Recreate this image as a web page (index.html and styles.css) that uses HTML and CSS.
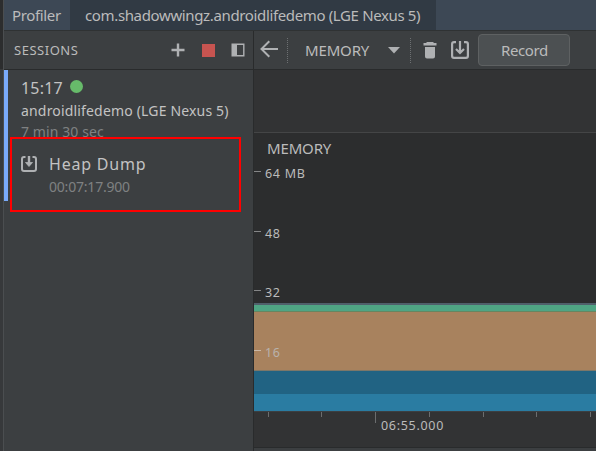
FILE: index.html
```html
<!DOCTYPE html>
<html lang="en">
<head>
<meta charset="utf-8">
<title>Profiler</title>
<link rel="stylesheet" href="styles.css">
</head>
<body>
<div class="window">
  <div class="gutter"></div>
  <div class="main">
    <header class="tabs">
      <div class="tab title"><span class="t-profiler">Profiler</span></div>
      <div class="tab active"><span class="t-app">com.shadowwingz.androidlifedemo (LGE Nexus 5)</span></div>
    </header>
    <div class="panes">
      <aside class="sessions">
        <div class="bar">
          <span class="t-sessions">SESSIONS</span>
          <svg class="ic plus" width="14" height="14" viewBox="0 0 14 14"><path d="M7 .5v13M.5 7h13" stroke="#afb1b3" stroke-width="2.4"/></svg>
          <div class="stop"></div>
          <svg class="ic panel" width="14" height="14" viewBox="0 0 14 14"><path d="M1.2 1.2h11.6v11.6H1.2z" fill="none" stroke="#afb1b3" stroke-width="1.4"/><path d="M1 1h5v12H1z" fill="#afb1b3"/></svg>
        </div>
        <div class="session">
          <div class="time"><span class="t-time">15:17</span><i class="dot"></i></div>
          <div class="device"><span class="t-device">androidlifedemo (LGE Nexus 5)</span></div>
          <div class="length"><span class="t-length">7 min 30 sec</span></div>
          <div class="dump">
            <svg class="ic" width="16" height="16" viewBox="0 0 16 16" fill="none" stroke="#afb1b3" stroke-width="2"><path d="M4.5 1H3Q1 1 1 3v10q0 2 2 2h10q2 0 2-2V3q0-2-2-2h-1.500"/><path d="M8 0v8" stroke-width="2.4"/><path d="M4.500 6.500h7L8 10.500z" fill="#afb1b3" stroke-width=".8"/></svg>
            <div>
              <div class="name"><span class="t-name">Heap Dump</span></div>
              <div class="stamp"><span class="t-stamp">00:07:17.900</span></div>
            </div>
          </div>
        </div>
        <div class="highlight"></div>
      </aside>
      <section class="stage">
        <div class="bar tools">
          <svg class="ic back" width="18" height="18" viewBox="0 0 18 18" fill="none" stroke="#afb1b3" stroke-width="2"><path d="M18 9H2M9.300 1.200L1.500 9l7.800 7.800"/></svg>
          <div class="sep s1"></div>
          <span class="t-tool">MEMORY</span>
          <svg class="ic caret" width="12" height="7" viewBox="0 0 12 7"><path d="M0 0h12L6 6.500z" fill="#afb1b3"/></svg>
          <div class="sep s2"></div>
          <svg class="ic trash" width="14" height="17" viewBox="0 0 14 17" fill="#afb1b3"><path d="M4 0h6l1 1h2.500v2.400H.500V1H3zM2 5h10v9.500q0 2-2 2H4q-2 0-2-2z"/></svg>
          <svg class="ic save" width="18" height="18" viewBox="0 0 18 18" fill="none" stroke="#afb1b3" stroke-width="2.200"><path d="M5 1.100H3Q1.100 1.100 1.100 3v12q0 1.900 1.900 1.900h12q1.900 0 1.900-1.900V3q0-1.900-1.900-1.900h-2M9 0v12M5 8l4 4 4-4"/></svg>
          <button class="record"><span class="t-record">Record</span></button>
        </div>
        <div class="events"></div>
        <div class="chart">
          <div class="stack">
            <div class="layer others"></div>
            <div class="layer code"></div>
            <div class="layer graphics"></div>
            <div class="layer native"></div>
            <div class="layer java"></div>
          </div>
          <div class="axis">
            <div class="heading"><span class="t-chart">MEMORY</span></div>
            <div class="mark"><span class="t-64">64 MB</span></div>
            <div class="mark"><span class="t-num">48</span></div>
            <div class="mark"><span class="t-num">32</span></div>
            <div class="mark over"><span class="t-num">16</span></div>
          </div>
        </div>
        <div class="timeline">
          <svg width="342" height="12" viewBox="0 0 342 12" fill="#6b6d6e"><path d="M14 0h1v5h-1zM67 0h1v5h-1zM121 0h1v11h-1zM175 0h1v5h-1zM229 0h1v5h-1zM282 0h1v5h-1zM336 0h1v5h-1z"/></svg>
          <span class="t-axis">06:55.000</span>
        </div>
        <div class="foot"></div>
      </section>
    </div>
  </div>
</div>
</body>
</html>
```
FILE: styles.css
```css
* { box-sizing: border-box; }
body { margin: 0; font-family: "Noto Sans", "Open Sans", sans-serif; font-size: 15px; color: #bbb; background: #3c3f41; overflow: hidden; }
.window { display: flex; width: 596px; height: 451px; white-space: nowrap; }
.gutter { width: 4px; background: linear-gradient(#2c2d2e 69px, #37393b 69px); border-right: 1px solid #4b4e50; }
.main { flex: 1; min-width: 0; display: flex; flex-direction: column; }
.tabs { display: flex; height: 31px; background: #3d4855; border-bottom: 1px solid #2f3233; line-height: 20px; padding-right: 160px; }
.tab { padding-top: 5px; }
.title { width: 66px; padding-left: 8px; }
.active { width: 366px; flex: none; padding-left: 15px; background: #313a44; }
.panes { display: flex; flex: 1; min-height: 0; }
.sessions { position: relative; width: 250px; border-right: 1px solid #292b2c; }
.bar { display: flex; align-items: center; height: 39px; border-bottom: 1px solid #292b2c; line-height: 20px; }
.ic { display: block; flex: none; }
.sessions .bar { padding-left: 10px; }
.t-sessions { width: 157px; }
.stop { width: 13px; height: 13px; margin-left: 17px; background: #c75450; }
.panel { margin-left: 16px; }
.session { height: 131px; border-left: 4px solid #7aaafa; padding: 6px 0 0 13px; }
.time { display: flex; align-items: center; height: 24px; line-height: 24px; color: #c3c3c3; }
.dot { width: 13px; height: 13px; margin: -3px 0 0 7px; border-radius: 50%; background: #67bb6a; }
.device { height: 21px; line-height: 21px; color: #c3c3c3; }
.length { height: 21px; line-height: 21px; color: #7f8182; }
.dump { display: flex; gap: 12px; padding-top: 13px; }
.dump .ic { margin-top: 1px; }
.name { height: 20px; line-height: 20px; margin-top: -1px; color: #c3c3c3; }
.stamp { height: 24px; line-height: 24px; color: #7f8182; }
.highlight { position: absolute; left: 6px; top: 106px; width: 231px; height: 75px; border: 2px solid #f00; }
.stage { flex: 1; min-width: 0; }
.back { margin: 0 0 2px 6px; }
.sep { width: 1px; height: 25px; background: repeating-linear-gradient(#6d7072 0 1px, transparent 1px 2px); }
.s1 { margin-left: 9px; }
.t-tool { width: 83px; margin-left: 17px; }
.s2 { margin-left: 10px; }
.trash { margin-left: 12px; }
.save { margin-left: 14px; }
.record { width: 92px; height: 32px; margin-left: 9px; padding: 0; border: 1px solid #5e6162; border-radius: 4px; background: #4c5052; color: inherit; font: inherit; line-height: 20px; text-align: left; padding-left: 22px; }
.events { height: 63px; background: #323334; border-bottom: 1px solid #444546; }
.chart { display: grid; height: 278px; background: #2c2d2e; }
.chart > * { grid-area: 1 / 1; }
.stack { align-self: end; }
.others { height: 2px; background: #50606b; }
.code { height: 7px; background: #4fa584; border-bottom: 1px solid #668661; }
.graphics { height: 59px; background: #a8825e; border-bottom: 1px solid #7c7769; }
.native { height: 23px; background: #216383; }
.java { height: 17px; background: #2a7ca2; }
.axis { padding-top: 5px; }
.heading { height: 33px; line-height: 20px; padding-left: 13px; }
.mark { display: flex; height: 59.7px; line-height: 18px; gap: 4px; }
.mark::before { content: ""; width: 7px; height: 1px; background: #858687; }
.mark span { margin-top: -6px; }
.over { color: #b8b2ad; height: 20px; }
.over::before { background: #cbb8a6; }
.timeline { height: 36px; background: #323334; border-top: 1px solid #3c3f41; }
.timeline svg { display: block; }
.timeline span { display: block; margin: -7px 0 0 127px; line-height: 18px; }
.foot { height: 4px; background: #3c3f41; border-top: 1px solid #292b2c; }
.t-profiler { letter-spacing: -.35px; }
.t-app { letter-spacing: -.36px; }
.t-device { letter-spacing: .17px; font-size: 14px; }
.t-length { letter-spacing: .1px; font-size: 14px; }
.t-sessions { font-size: 13px; letter-spacing: .52px; }
.t-time { font-size: 16px; letter-spacing: .2px; }
.t-name { font-size: 16px; letter-spacing: .8px; }
.t-stamp { font-size: 14px; letter-spacing: -.2px; }
.t-tool, .t-chart { letter-spacing: -.15px; }
.t-record { letter-spacing: -.4px; }
.t-num, .t-64, .t-axis { font-size: 12.5px; letter-spacing: .7px; }
```
